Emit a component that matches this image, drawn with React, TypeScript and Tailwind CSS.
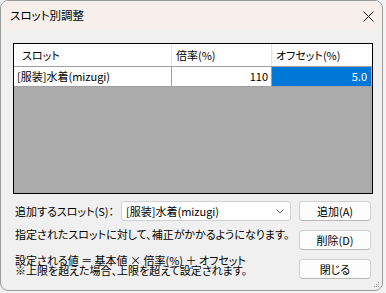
import React from "react";

function Btn({ children }: { children: React.ReactNode }) {
  return (
    <div className="h-[20px] w-[72px] rounded-[4px] border border-[#d0d0d0] border-b-[#b8b8b8] bg-[#fdfdfd] flex items-center justify-center leading-none">
      {children}
    </div>
  );
}

const NOTE = "設定される値 ＝ 基本値 × 倍率(%) ＋ オフセット\n※上限を超えた場合、上限を超えて設定されます。";

export default function App() {
  return (
    <div className="w-[386px] h-[293px] bg-[#f3f3f3] font-['Noto_Sans_CJK_JP',sans-serif] text-[11px] text-black whitespace-nowrap [font-feature-settings:'palt']">
      <div className="relative w-[383px] h-[291px] rounded-[8px] border border-[#9a9a9a] bg-[#f0f0f0] overflow-hidden flex flex-col">
        <div className="h-[30px] shrink-0 bg-[#f6efeb] flex items-center justify-between pl-[9px] pr-[7px]">
          <span className="leading-none text-[11.5px]">スロット別調整</span>
          <svg width="11" height="11" viewBox="0 0 11 11" className="mr-[1px]">
            <path d="M0.5 0.5 L10.5 10.5 M10.5 0.5 L0.5 10.5" stroke="#1a1a1a" strokeWidth="1" fill="none" />
          </svg>
        </div>
        <div className="flex flex-col pl-[12px] pt-[12px]">
          <div className="w-[360px] h-[151px] border border-black bg-[#ababab] flex flex-col">
            <div className="h-[23px] bg-white border-b border-[#a0a0a0] flex shrink-0">
              <div className="w-[158px] border-r border-[#e5e5e5] flex items-center pl-[8px]">スロット</div>
              <div className="w-[100px] border-r border-[#e5e5e5] flex items-center pl-[4px]">倍率(%)</div>
              <div className="w-[99px] flex items-center pl-[4px]">オフセット(%)</div>
            </div>
            <div className="h-[20px] flex border-b border-[#a0a0a0] shrink-0 w-[358px]">
              <div className="w-[158px] bg-white border-r border-[#a0a0a0] flex items-center pl-[3px]">[服装]水着(mizugi)</div>
              <div className="w-[100px] bg-white border-r border-[#a0a0a0] flex items-center justify-end pr-[3px]">110</div>
              <div className="w-[99px] bg-[#0078d7] text-white flex items-center justify-end pr-[4px]">5.0</div>
            </div>
          </div>
          <div className="mt-[7px] w-[358px] grid grid-cols-[1fr_72px] gap-x-[8px] gap-y-[9px]">
            <div className="h-[20px] flex items-center justify-between pl-[2px]">
              <span className="leading-none">追加するスロット(S)：</span>
              <div className="h-[20px] w-[170px] rounded-[3px] border border-[#d0d0d0] bg-white flex items-center justify-between pl-[4px] pr-[6px]">
                <span className="leading-none">[服装]水着(mizugi)</span>
                <svg width="8" height="5" viewBox="0 0 8 5">
                  <path d="M0.5 0.5 L4 4 L7.5 0.5" stroke="#606060" strokeWidth="1" fill="none" />
                </svg>
              </div>
            </div>
            <Btn>追加(A)</Btn>
            <div className="h-[20px] pl-[2px]">
              <div className="-mt-[3px] leading-[14px]">指定されたスロットに対して、補正がかかるようになります。</div>
            </div>
            <Btn>削除(D)</Btn>
            <div className="h-[20px] pl-[2px]">
              <div className="-mt-[4px] leading-[10px] whitespace-pre">{NOTE}</div>
            </div>
            <Btn>閉じる</Btn>
          </div>
        </div>
        <svg width="7" height="7" viewBox="0 0 7 7" className="absolute right-[2px] bottom-[2px]">
          <rect x="5" y="1" width="1" height="1" fill="#9a9a9a" />
          <rect x="3" y="3" width="1" height="1" fill="#9a9a9a" />
          <rect x="5" y="3" width="1" height="1" fill="#9a9a9a" />
          <rect x="1" y="5" width="1" height="1" fill="#9a9a9a" />
          <rect x="3" y="5" width="1" height="1" fill="#9a9a9a" />
          <rect x="5" y="5" width="1" height="1" fill="#9a9a9a" />
        </svg>
      </div>
    </div>
  );
}
